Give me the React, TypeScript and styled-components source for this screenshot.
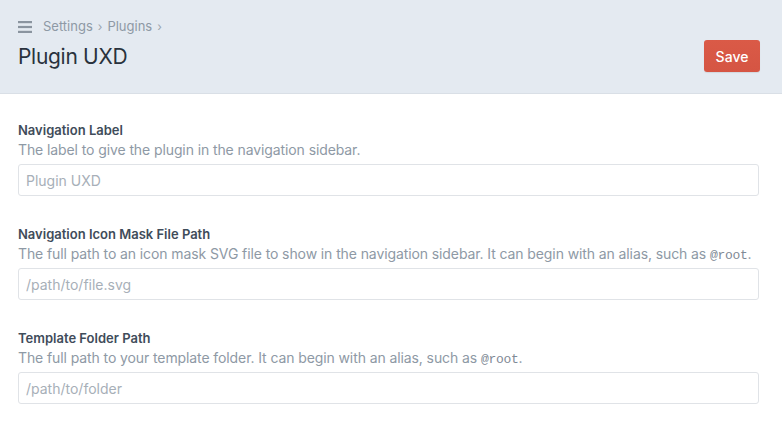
import React from 'react';
import styled, { createGlobalStyle } from 'styled-components';

const colors = {
    headerBg: '#e4eaf1',
    headerLine: '#d9dfe6',
    title: '#29323d',
    label: '#3f4c5a',
    muted: '#8e99a5',
    placeholder: '#a7afb8',
    inputLine: '#e0e3e7',
    save: '#da5a47',
};

const GlobalStyle = createGlobalStyle`
    html, body {
        margin: 0;
        padding: 0;
        background: #ffffff;
    }
    body {
        font-family: Inter, 'Liberation Sans', Arial, sans-serif;
        -webkit-font-smoothing: antialiased;
    }
    * {
        box-sizing: border-box;
    }
`;

const Page = styled.div`
    width: 782px;
    min-height: 425px;
    background: #ffffff;
`;

const Header = styled.header`
    display: flex;
    align-items: flex-end;
    justify-content: space-between;
    padding: 16px 22px 21px 18px;
    background: ${colors.headerBg};
    border-bottom: 1px solid ${colors.headerLine};
`;

const HeaderLeft = styled.div`
    display: flex;
    flex-direction: column;
    gap: 6px;
`;

const Crumbs = styled.nav`
    display: flex;
    align-items: center;
    height: 20px;
    font-size: 13px;
    color: ${colors.muted};
`;

const Burger = styled.svg`
    width: 14px;
    height: 12px;
    margin-right: 11px;
    margin-top: 1px;
    fill: #8a949f;
`;

const Sep = styled.span`
    margin: 0 5px;
    font-size: 12px;
    color: #9aa4ae;
`;

const Title = styled.h1`
    margin: 0;
    font-size: 21px;
    line-height: 30px;
    font-weight: 400;
    color: ${colors.title};
    letter-spacing: -0.3px;
`;

const SaveButton = styled.button`
    width: 56px;
    height: 32px;
    border: none;
    border-radius: 3px;
    background: linear-gradient(${colors.save}, #d55543);
    box-shadow: 0 1px 1px rgba(0, 0, 0, 0.08);
    color: #ffffff;
    font-family: Inter, 'Liberation Sans', Arial, sans-serif;
    font-size: 14px;
    font-weight: 500;
    cursor: pointer;
`;

const Body = styled.main`
    padding: 26px 23px 0 18px;
`;

const Field = styled.div`
    display: flex;
    flex-direction: column;
    margin-bottom: 28px;
`;

const Label = styled.label`
    font-size: 13px;
    line-height: 20px;
    font-weight: 600;
    color: ${colors.label};
`;

const Hint = styled.div`
    font-size: 14px;
    line-height: 20px;
    height: 20px;
    color: ${colors.muted};
    margin-bottom: 4px;
    letter-spacing: -0.1px;

    code {
        font-family: 'Liberation Mono', 'DejaVu Sans Mono', monospace;
        font-size: 13px;
        line-height: 1;
        letter-spacing: -0.3px;
        color: #7f8a96;
    }
`;

const TextInput = styled.input`
    width: 100%;
    height: 32px;
    padding: 0 7px;
    border: 1px solid ${colors.inputLine};
    border-radius: 3px;
    font-family: Inter, 'Liberation Sans', Arial, sans-serif;
    font-size: 14px;
    color: ${colors.title};
    outline: none;

    &::placeholder {
        color: ${colors.placeholder};
    }
`;

const fields = [
    {
        label: 'Navigation Label',
        hint: <>The label to give the plugin in the navigation sidebar.</>,
        placeholder: 'Plugin UXD',
    },
    {
        label: 'Navigation Icon Mask File Path',
        hint: <>The full path to an icon mask SVG file to show in the navigation sidebar. It can begin with an alias, such as <code>@root</code>.</>,
        placeholder: '/path/to/file.svg',
    },
    {
        label: 'Template Folder Path',
        hint: <>The full path to your template folder. It can begin with an alias, such as <code>@root</code>.</>,
        placeholder: '/path/to/folder',
    },
];

const App = () => {
    return (
        <>
            <GlobalStyle />
            <Page>
                <Header>
                    <HeaderLeft>
                        <Crumbs>
                            <Burger viewBox="0 0 14 12">
                                <rect x="0" y="0" width="14" height="2.2" />
                                <rect x="0" y="4.9" width="14" height="2.2" />
                                <rect x="0" y="9.8" width="14" height="2.2" />
                            </Burger>
                            <span>Settings</span>
                            <Sep>›</Sep>
                            <span>Plugins</span>
                            <Sep>›</Sep>
                        </Crumbs>
                        <Title>Plugin UXD</Title>
                    </HeaderLeft>
                    <SaveButton>Save</SaveButton>
                </Header>
                <Body>
                    {fields.map((f) => (
                        <Field key={f.label}>
                            <Label>{f.label}</Label>
                            <Hint>{f.hint}</Hint>
                            <TextInput placeholder={f.placeholder} />
                        </Field>
                    ))}
                </Body>
            </Page>
        </>
    );
};

export default App;
